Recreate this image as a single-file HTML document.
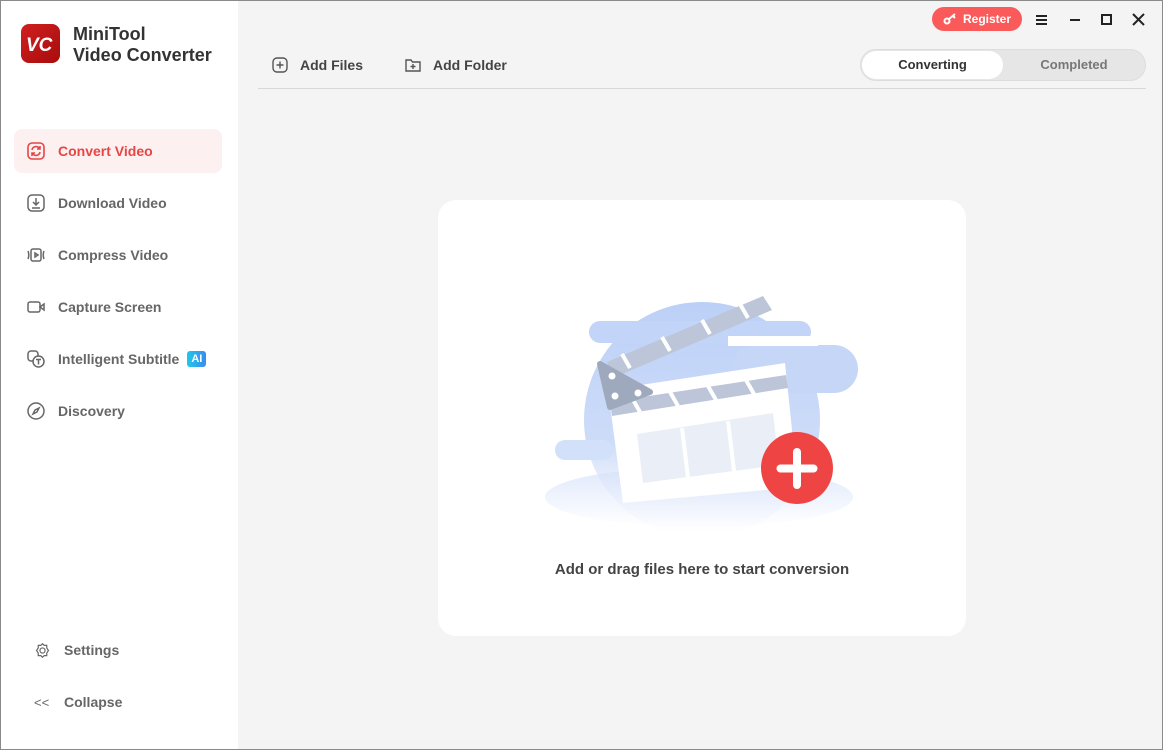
<!DOCTYPE html>
<html><head><meta charset="utf-8"><style>
*{margin:0;padding:0;box-sizing:border-box}
body{width:1163px;height:750px;overflow:hidden;font-family:"Liberation Sans",sans-serif;background:#f4f4f4;position:relative}
.frame{position:absolute;inset:0;border:1px solid #8a8a8a;pointer-events:none;z-index:10}
.side{position:absolute;left:0;top:0;width:238px;height:750px;background:#fff}
.logo{position:absolute;left:21px;top:24px;width:39px;height:39px;border-radius:8px;background:linear-gradient(135deg,#d02020,#a80c0c)}
.title{position:absolute;left:73px;top:24px;font-size:18px;font-weight:bold;color:#333;line-height:21px}
.nav{position:absolute;left:14px;width:208px;height:44px;border-radius:8px;display:flex;align-items:center;padding-left:12px;font-size:14px;color:#666;font-weight:bold}
.nav svg{width:20px;height:20px;margin-right:12px;flex:none}
.nav.act{background:#fdf0f0;color:#e84545}
.ai{display:inline-block;margin-left:8px;background:linear-gradient(90deg,#20c8e8,#3a8bf0);color:#fff;font-size:11px;padding:1px 4px;border-radius:3px;line-height:14px}
.top{position:absolute;font-size:14px;color:#444;font-weight:bold;display:flex;align-items:center}
.top svg{margin-right:12px}
.reg{position:absolute;left:932px;top:7px;width:90px;height:24px;border-radius:12px;background:#fa5a5a;color:#fff;font-size:12px;font-weight:bold;display:flex;align-items:center;justify-content:center}
.tabs{position:absolute;left:860px;top:49px;width:286px;height:32px;border-radius:16px;background:#e6e6e6;border:1px solid #ddd}
.tab1{position:absolute;left:1px;top:1px;width:141px;height:28px;border-radius:14px;background:#fff;font-size:13px;font-weight:bold;color:#333;text-align:center;line-height:28px}
.tab2{position:absolute;left:142px;top:1px;width:142px;height:28px;font-size:13px;font-weight:bold;color:#777;text-align:center;line-height:28px}
.line{position:absolute;left:258px;top:88px;width:888px;height:1px;background:#d8d8d8}
.card{position:absolute;left:438px;top:200px;width:528px;height:436px;background:#fff;border-radius:18px}
.msg{position:absolute;left:0;width:100%;top:361px;text-align:center;font-size:15px;color:#444;font-weight:bold}
</style></head><body>
<div class="side">
<div class="logo"><svg width="39" height="39" viewBox="0 0 39 39"><text x="5" y="27" font-family="Liberation Sans" font-weight="bold" font-style="italic" font-size="19" fill="#fff">VC</text></svg></div>
<div class="title">MiniTool<br>Video Converter</div>
<div class="nav act" style="top:129px"><svg viewBox="0 0 20 20" fill="none" stroke="#e84545" stroke-width="1.6"><rect x="2" y="2" width="16" height="16" rx="4"/><path d="M6 9a4 4 0 0 1 7-2l1 1M14 11a4 4 0 0 1-7 2l-1-1M14 5v3h-3M6 15v-3h3"/></svg>Convert Video</div>
<div class="nav" style="top:181px"><svg viewBox="0 0 20 20" fill="none" stroke="#666" stroke-width="1.5"><rect x="2" y="2" width="16" height="16" rx="4"/><path d="M10 5v7M7 9l3 3 3-3M6 15h8"/></svg>Download Video</div>
<div class="nav" style="top:233px"><svg viewBox="0 0 20 20" fill="none" stroke="#666" stroke-width="1.5"><rect x="5" y="4" width="10" height="12" rx="2"/><path d="M9 8l3 2-3 2zM2 6c1 2 1 6 0 8M18 6c-1 2-1 6 0 8"/></svg>Compress Video</div>
<div class="nav" style="top:285px"><svg viewBox="0 0 20 20" fill="none" stroke="#666" stroke-width="1.5"><rect x="2" y="5" width="12" height="10" rx="2"/><path d="M14 10l4-3v6z"/></svg>Capture Screen</div>
<div class="nav" style="top:337px"><svg viewBox="0 0 20 20" fill="none" stroke="#666" stroke-width="1.5"><rect x="2" y="2" width="10" height="10" rx="3"/><circle cx="12.5" cy="12.5" r="5.5" fill="#fff"/><path d="M10 10.5h5M12.5 10.5v5"/></svg>Intelligent Subtitle<span class="ai">AI</span></div>
<div class="nav" style="top:389px"><svg viewBox="0 0 20 20" fill="none" stroke="#666" stroke-width="1.5"><circle cx="10" cy="10" r="8"/><path d="M13 7l-2 4-4 2 2-4z"/></svg>Discovery</div>
<div class="nav" style="top:628px;padding-left:20px"><svg viewBox="0 0 20 20" fill="none" stroke="#666" stroke-width="1.4" style="width:17px;height:17px;margin-right:13px"><circle cx="10" cy="10" r="3"/><path d="M10 2l2 2h3v3l2 3-2 3v3h-3l-2 2-2-2H5v-3l-2-3 2-3V4h3z"/></svg>Settings</div>
<div class="nav" style="top:680px;padding-left:20px"><span style="width:17px;margin-right:13px;color:#666;font-size:13px;font-weight:normal">&lt;&lt;</span>Collapse</div>
</div>
<div class="top" style="left:272px;top:57px"><svg width="16" height="16" viewBox="0 0 16 16" fill="none" stroke="#555" stroke-width="1.4"><rect x="1" y="1" width="14" height="14" rx="4"/><path d="M8 4.5v7M4.5 8h7"/></svg>Add Files</div>
<div class="top" style="left:405px;top:57px"><svg width="16" height="16" viewBox="0 0 16 16" fill="none" stroke="#555" stroke-width="1.4"><path d="M1 3h5l1.5 2H15v9H1z"/><path d="M8 7v5M5.5 9.5h5"/></svg>Add Folder</div>
<div class="reg"><svg width="14" height="12" viewBox="0 0 14 12" fill="none" stroke="#fff" stroke-width="2" style="margin-right:6px"><circle cx="4" cy="8" r="2.5"/><path d="M6 6l6-5M10 3l2 2"/></svg>Register</div>
<svg style="position:absolute;left:1036px;top:13px" width="110" height="14" fill="none" stroke="#222" stroke-width="2"><path d="M0 3h11M0 7h11M0 11h11M34 7h10M66 2h9v9h-9zM97 1l11 11M108 1L97 12"/></svg>
<div class="tabs"><div class="tab1">Converting</div><div class="tab2">Completed</div></div>
<div class="line"></div>
<div class="card">
<svg style="position:absolute;left:92px;top:80px" width="340" height="250" viewBox="0 0 340 250">
<defs>
<linearGradient id="g1" x1="0" y1="0" x2="0" y2="1"><stop offset="0" stop-color="#bcd0f7"/><stop offset="0.6" stop-color="#cddcf8"/><stop offset="1" stop-color="#eef3fd" stop-opacity="0"/></linearGradient>
<linearGradient id="g2" x1="0" y1="0" x2="0" y2="1"><stop offset="0" stop-color="#dfe8fb"/><stop offset="1" stop-color="#fff"/></linearGradient>
</defs>
<ellipse cx="169" cy="217" rx="154" ry="30" fill="url(#g2)"/>
<circle cx="172" cy="140" r="118" fill="url(#g1)"/>
<rect x="59" y="41" width="222" height="22" rx="11" fill="#c2d4f7"/>
<rect x="202" y="65" width="126" height="48" rx="24" fill="#c5d6f7"/>
<rect x="198" y="56" width="90" height="10" fill="#fff"/>
<rect x="25" y="160" width="58" height="20" rx="10" fill="#d3e0f9"/>
<polygon points="78,110 255,83 268,207 93,223" fill="#fff"/>
<polygon points="80,122 256,95 258,108 82,136" fill="#bcc6d8"/>
<g stroke="#fff" stroke-width="4"><path d="M110 132l-8-14M148 126l-8-14M186 120l-8-14M224 114l-8-14"/></g>
<polygon points="107,154 243,133 249,185 113,203" fill="#eaeff7"/>
<path d="M152 148l6 50M198 141l6 50" stroke="#fff" stroke-width="4"/>
<polygon points="77,82 233,16 242,30 83,98" fill="#bcc6d8"/>
<g stroke="#fff" stroke-width="4"><path d="M100 88l-8-14M140 71l-8-14M180 54l-8-14M218 38l-8-14"/></g>
<polygon points="70,84 120,112 80,127" fill="#9fa9bd" stroke="#9fa9bd" stroke-width="6" stroke-linejoin="round"/>
<g fill="#fff"><circle cx="82" cy="96" r="3.5"/><circle cx="85" cy="116" r="3.5"/><circle cx="108" cy="113" r="3.5"/></g>
<circle cx="267" cy="188" r="36" fill="#ef4444"/>
<path d="M267 172v33M250.5 188.5h33" stroke="#fff" stroke-width="8" stroke-linecap="round"/>
</svg>
<div class="msg">Add or drag files here to start conversion</div>
</div>
<div class="frame"></div>
</body></html>
